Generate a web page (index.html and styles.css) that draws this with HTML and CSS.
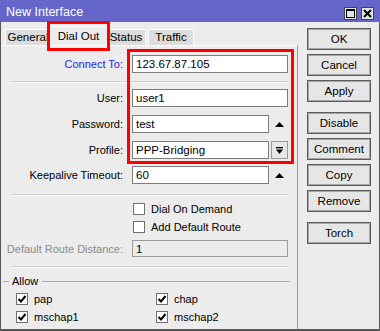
FILE: index.html
```html
<!DOCTYPE html>
<html>
<head>
<meta charset="utf-8">
<link rel="stylesheet" href="styles.css">
</head>
<body>
<div class="win">
  <div class="titlebar">
    <span class="title">New Interface</span>
    <div class="tbtns">
      <span class="tbtn"><svg width="9" height="9" viewBox="0 0 9 9"><rect x="0.5" y="0.5" width="8" height="8" fill="none" stroke="#000" stroke-width="1"/><rect x="0" y="0" width="9" height="2" fill="#000"/></svg></span>
      <span class="tbtn"><svg width="9" height="9" viewBox="0 0 9 9"><path d="M1 1 L8 8 M8 1 L1 8" stroke="#000" stroke-width="2"/></svg></span>
    </div>
  </div>
  <div class="body">
    <div class="left">
      <div class="tabs">
        <div class="tab t-gen">General</div>
        <div class="tab active">Dial Out</div>
        <div class="tab t-stat">Status</div>
        <div class="tab t-traf">Traffic</div>
      </div>
      <div class="panel">
        <div class="row r-connect">
          <label class="lbl blue">Connect To:</label>
          <div class="inp wide">123.67.87.105</div>
        </div>
        <div class="sep s1"></div>
        <div class="row r-user">
          <label class="lbl">User:</label>
          <div class="inp wide">user1</div>
        </div>
        <div class="row r-pass">
          <label class="lbl">Password:</label>
          <div class="inp">test</div>
          <span class="up"><svg width="9" height="5" viewBox="0 0 9 5"><path d="M0 5 L4.5 0 L9 5 Z" fill="#000"/></svg></span>
        </div>
        <div class="row r-prof">
          <label class="lbl">Profile:</label>
          <div class="inp">PPP-Bridging</div>
          <span class="dd"><svg width="7" height="7" viewBox="0 0 7 7"><rect x="0" y="0" width="7" height="1.3" fill="#000"/><path d="M0 2.5 L7 2.5 L3.5 7 Z" fill="#000"/></svg></span>
        </div>
        <div class="row r-keep">
          <label class="lbl">Keepalive Timeout:</label>
          <div class="inp">60</div>
          <span class="up"><svg width="9" height="5" viewBox="0 0 9 5"><path d="M0 5 L4.5 0 L9 5 Z" fill="#000"/></svg></span>
        </div>
        <div class="sep s2"></div>
        <div class="crow c1">
          <span class="cb"></span><span class="ctext">Dial On Demand</span>
        </div>
        <div class="crow c2">
          <span class="cb"></span><span class="ctext">Add Default Route</span>
        </div>
        <div class="row r-dist">
          <label class="lbl gray">Default Route Distance:</label>
          <div class="inp wide dis">1</div>
        </div>
        <div class="sep s3"></div>
        <div class="group">
          <span class="gline short"></span><span class="gtitle">Allow</span><span class="gline long"></span>
        </div>
        <div class="allow">
          <div class="acell"><span class="cb on"><svg width="10" height="10" viewBox="0 0 10 10"><path d="M1.5 5 L4 7.5 L8.5 2" fill="none" stroke="#000" stroke-width="2"/></svg></span><span class="ctext">pap</span></div>
          <div class="acell"><span class="cb on"><svg width="10" height="10" viewBox="0 0 10 10"><path d="M1.5 5 L4 7.5 L8.5 2" fill="none" stroke="#000" stroke-width="2"/></svg></span><span class="ctext">chap</span></div>
          <div class="acell"><span class="cb on"><svg width="10" height="10" viewBox="0 0 10 10"><path d="M1.5 5 L4 7.5 L8.5 2" fill="none" stroke="#000" stroke-width="2"/></svg></span><span class="ctext">mschap1</span></div>
          <div class="acell"><span class="cb on"><svg width="10" height="10" viewBox="0 0 10 10"><path d="M1.5 5 L4 7.5 L8.5 2" fill="none" stroke="#000" stroke-width="2"/></svg></span><span class="ctext">mschap2</span></div>
        </div>
      </div>
    </div>
    <div class="buttons">
      <div class="btn">OK</div>
      <div class="btn">Cancel</div>
      <div class="btn">Apply</div>
      <div class="btn gap">Disable</div>
      <div class="btn">Comment</div>
      <div class="btn">Copy</div>
      <div class="btn">Remove</div>
      <div class="btn gap">Torch</div>
    </div>
  </div>
  <div class="mark mark-tab"></div>
  <div class="mark mark-fields"></div>
</div>
</body>
</html>
```
FILE: styles.css
```css
* { box-sizing: border-box; }
html, body { margin: 0; padding: 0; }
body {
  font-family: "Liberation Sans", Arial, sans-serif;
  font-size: 11px;
  color: #000;
  background: #ececec;
}
.win {
  position: relative;
  width: 380px;
  height: 331px;
  display: flex;
  flex-direction: column;
}
.titlebar {
  height: 22px;
  background: #6466ca;
  display: flex;
  align-items: center;
  justify-content: space-between;
  padding: 0 6px 0 6px;
  flex: none;
}
.title {
  color: #fff;
  font-size: 12.5px;
  padding-top: 1px;
}
.tbtns { display: flex; gap: 4px; margin-top: 4px; }
.tbtn {
  width: 13px;
  height: 13px;
  background: #e4e4e4;
  border: 1px solid #444;
  display: flex;
  align-items: center;
  justify-content: center;
}
.body {
  flex: 1;
  display: flex;
  background: #ececec;
  border-left: 1px solid #555;
  border-right: 1px solid #555;
  border-bottom: 2px solid #555;
  padding-left: 1px;
}
.left {
  width: 296px;
  display: flex;
  flex-direction: column;
  padding-top: 4px;
}
.tabs {
  height: 19px;
  display: flex;
  align-items: flex-end;
  padding-left: 3px;
}
.tab {
  height: 16px;
  background: #dcdcdc;
  border: 1px solid #fff;
  border-bottom: none;
  line-height: 15px;
  text-align: center;
  font-size: 11.5px;
  flex: none;
}
.t-gen { width: 46px; }
.t-stat { width: 40px; margin-left: -2px; }
.t-traf { width: 46px; margin-left: 2px; }
.tab.active {
  position: relative;
  z-index: 1;
  width: 59px;
  height: 19px;
  background: #ececec;
  margin-left: -2px;
  line-height: 18px;
}
.panel {
  flex: 1;
  border-top: 1px solid #fff;
  border-right: 1px solid #999;
  display: flex;
  flex-direction: column;
  padding-top: 9px;
}
.row {
  display: flex;
  align-items: center;
  height: 18px;
}
.lbl {
  width: 122px;
  text-align: right;
  padding-right: 1px;
  margin-right: 8px;
  flex: none;
}
.blue { color: #2222ee; }
.gray { color: #8a8a8a; }
.inp {
  width: 137px;
  height: 18px;
  background: #fff;
  border: 1px solid #7c7c7c;
  padding: 0 3px;
  line-height: 16px;
  font-size: 11.5px;
}
.inp.wide { width: 156px; }
.inp.dis { background: #ececec; border-color: #9a9a9a; height: 17px; }
.up {
  width: 19px;
  display: flex;
  justify-content: center;
  margin-left: 1px;
}
.dd {
  width: 17px;
  height: 18px;
  margin-left: 2px;
  border: 1px solid #9a9a9a;
  background: #e6e6e6;
  display: flex;
  align-items: center;
  justify-content: center;
}
.sep {
  height: 2px;
  border-top: 1px solid #cfcfcf;
  border-bottom: 1px solid #fafafa;
  margin-left: 9px;
  width: 278px;
}
.s1 { margin-top: 8px; margin-bottom: 6px; }
.r-pass { margin-top: 8px; }
.r-prof { margin-top: 8px; }
.r-keep { margin-top: 7px; }
.s2 { margin-top: 10px; margin-bottom: 7px; }
.crow {
  display: flex;
  align-items: center;
  height: 12px;
  padding-left: 131px;
}
.c2 { margin-top: 6px; }
.cb {
  width: 12px;
  height: 12px;
  background: #fff;
  border: 1px solid #707070;
  flex: none;
  display: flex;
  align-items: center;
  justify-content: center;
}
.ctext { margin-left: 6px; }
.r-dist { margin-top: 7px; height: 17px; }
.s3 { margin-top: 9px; }
.group {
  display: flex;
  align-items: center;
  margin-top: 7px;
  height: 12px;
}
.gline { height: 1px; background: #a8a8a8; }
.short { width: 6px; margin-left: 1px; }
.long { flex: 1; margin-right: 7px; }
.gtitle { padding: 0 4px 0 3px; }
.allow {
  display: grid;
  grid-template-columns: 140px 140px;
  row-gap: 6px;
  padding-left: 14px;
  margin-top: 6px;
}
.acell { display: flex; align-items: center; height: 12px; }
.buttons {
  display: flex;
  flex-direction: column;
  gap: 4px;
  padding-top: 6px;
  margin-left: 9px;
}
.btn {
  width: 64px;
  height: 22px;
  border: 1px solid #5c5c5c;
  box-shadow: inset 0 0 0 1px #a6a6a6;
  background: #e6e6e6;
  display: flex;
  align-items: center;
  justify-content: center;
  font-size: 11.5px;
}
.btn.gap { margin-top: 6px; }
.mark {
  position: absolute;
  z-index: 2;
  border: 3px solid #ff0000;
  pointer-events: none;
}
.mark-tab { left: 47px; top: 21px; width: 63px; height: 30px; }
.mark-fields { left: 127px; top: 49px; width: 167px; height: 115px; }
```
